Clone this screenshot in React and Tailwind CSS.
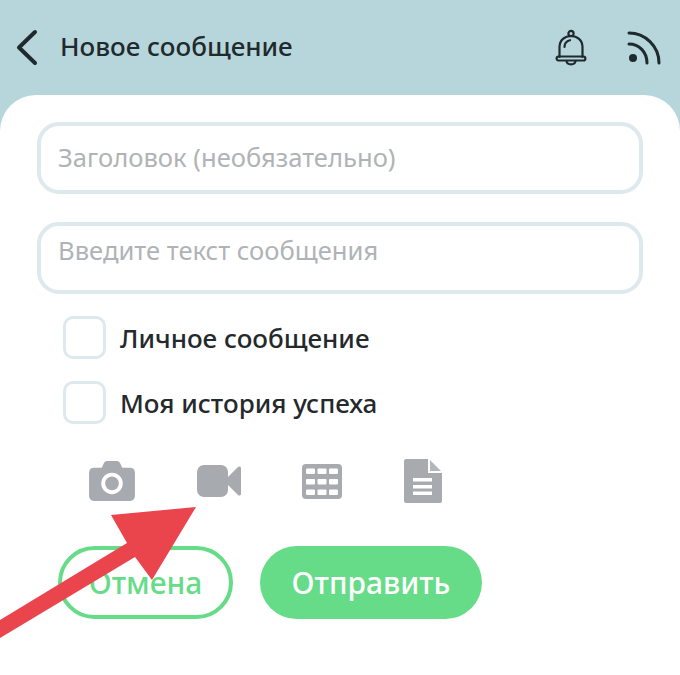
const font = { fontFamily: '"Noto Sans", sans-serif' };

const BackIcon = () => (
  <svg width="24" height="38" viewBox="0 0 24 38" fill="none" stroke="#1f2a2e" strokeWidth="4" strokeLinecap="round" strokeLinejoin="round">
    <path d="M20 3 L4 18.5 L20 34" />
  </svg>
);

const BellIcon = () => (
  <svg width="34" height="38" viewBox="0 0 34 38" fill="none" stroke="#1f2a2e" strokeWidth="2.2" strokeLinecap="round" strokeLinejoin="round">
    <circle cx="17" cy="4.5" r="2.6" />
    <path d="M5.5 28 V18 C5.5 11 11 7 17 7 C23 7 28.5 11 28.5 18 V28" />
    <path d="M10.5 18 C10.5 14.5 12.5 12 16 11.2" />
    <path d="M4.5 27.5 H29.5 C32 27.5 32 31.5 29.5 31.5 H4.5 C2 31.5 2 27.5 4.5 27.5 Z" />
    <path d="M12.5 32 C13 36.5 21 36.5 21.5 32" />
  </svg>
);

const RssIcon = () => (
  <svg width="36" height="36" viewBox="0 0 36 36" fill="none" stroke="#1f2a2e" strokeWidth="3" strokeLinecap="round">
    <path d="M3 3 C19 3 33 16 33 33" />
    <path d="M3 14 C13 14 21 22 21 33" />
    <circle cx="7" cy="28" r="4" fill="#1f2a2e" stroke="none" />
  </svg>
);

const CameraIcon = () => (
  <svg width="46" height="40" viewBox="0 0 47 41">
    <path fill="#a7aaae" d="M5 7 H13 L15 2.5 C15.7 1 16.7 0 18.5 0 H28.5 C30.3 0 31.3 1 32 2.5 L34 7 H42 C45 7 47 9 47 12 V36 C47 39 45 41 42 41 H5 C2 41 0 39 0 36 V12 C0 9 2 7 5 7 Z" />
    <circle cx="23.5" cy="23" r="11" fill="#fff" />
    <circle cx="23.5" cy="23" r="7" fill="#a7aaae" />
  </svg>
);

const VideoIcon = () => (
  <svg width="44" height="32" viewBox="0 0 44 32" fill="#a7aaae">
    <rect x="0" y="0" width="31" height="32" rx="7" />
    <path d="M31 12 L41 2 C42 1 44 1.5 44 3 V29 C44 30.5 42 31 41 30 L31 20 Z" />
  </svg>
);

const TableIcon = () => (
  <svg width="40" height="35" viewBox="0 0 40 35">
    <rect width="40" height="35" rx="4" fill="#a7aaae" />
    {[4.5, 15, 25.5].map((y) =>
      [4, 15.5, 27].map((x) => (
        <rect key={`${x}-${y}`} x={x} y={y} width="9" height="5.5" rx="1" fill="#fff" />
      ))
    )}
  </svg>
);

const FileIcon = () => (
  <svg width="38" height="44" viewBox="0 0 38 44">
    <path fill="#a7aaae" d="M2 0 H24 V14 H38 V42 C38 43 37 44 36 44 H2 C1 44 0 43 0 42 V2 C0 1 1 0 2 0 Z" />
    <path fill="#b4b7ba" d="M26 1 L37 12 H26 Z" />
    <rect x="9" y="19" width="19" height="3.5" fill="#fff" />
    <rect x="9" y="26" width="19" height="3.5" fill="#fff" />
    <rect x="9" y="32.5" width="19" height="3.5" fill="#fff" />
  </svg>
);

const CheckRow = ({ label }) => (
  <div className="flex items-center h-[43px]">
    <div className="w-[43px] h-[43px] rounded-[10px] border-[3px] border-[#dde9ed] bg-white" />
    <span className="ml-[14px] mt-[2px] text-[26px] font-medium text-[#24292c]">{label}</span>
  </div>
);

const App = () => {
  return (
    <div className="relative w-[680px] h-[675px] overflow-hidden bg-[#b7d6dc]" style={font}>
      {/* header */}
      <header className="flex items-center justify-between h-[95px] pl-[15px] pr-[18px]">
        <div className="flex items-center">
          <BackIcon />
          <h1 className="ml-[21px] text-[26px] font-medium text-[#1f2a2e] -mt-[2px]">Новое сообщение</h1>
        </div>
        <div className="flex items-center gap-[38px]">
          <BellIcon />
          <RssIcon />
        </div>
      </header>

      {/* form */}
      <main className="h-[580px] bg-white rounded-t-[36px] pt-[27px] px-[37px]">
        <div className="flex items-center h-[72px] pl-[17px] pr-[18px] rounded-[22px] border-[4px] border-[#dde9ed] text-[25.6px] text-[#b0b3b6]">
          Заголовок (необязательно)
        </div>
        <div className="mt-[28px] h-[72px] pl-[17px] pr-[18px] pt-[6px] rounded-[22px] border-[4px] border-[#dde9ed] text-[25.6px] text-[#b0b3b6]">
          Введите текст сообщения
        </div>
        <div className="mt-[22px] ml-[26px] flex flex-col gap-[22px]">
          <CheckRow label="Личное сообщение" />
          <CheckRow label="Моя история успеха" />
        </div>
        <div className="mt-[33px] ml-[52px] flex items-center h-[48px]">
          <CameraIcon />
          <div className="ml-[62px]"><VideoIcon /></div>
          <div className="ml-[61px]"><TableIcon /></div>
          <div className="ml-[62px]"><FileIcon /></div>
        </div>
        <div className="mt-[41px] ml-[21px] flex items-center gap-[27px]">
          <button className="w-[175px] h-[73px] rounded-full border-[4px] border-[#66db88] bg-white text-[30px] font-medium text-[#66db88]">
            Отмена
          </button>
          <button className="w-[222px] h-[73px] rounded-full bg-[#66db88] text-[30px] font-medium text-white">
            Отправить
          </button>
        </div>
      </main>

      {/* red annotation arrow */}
      <svg className="absolute left-0 top-0 pointer-events-none" width="680" height="675" viewBox="0 0 680 675">
        <path fill="#ea444d" d="M196 507 L111 515 L127 543 L0 620 L0 638 L135 557 L152 580 Z" />
      </svg>
    </div>
  );
};

export default App;
